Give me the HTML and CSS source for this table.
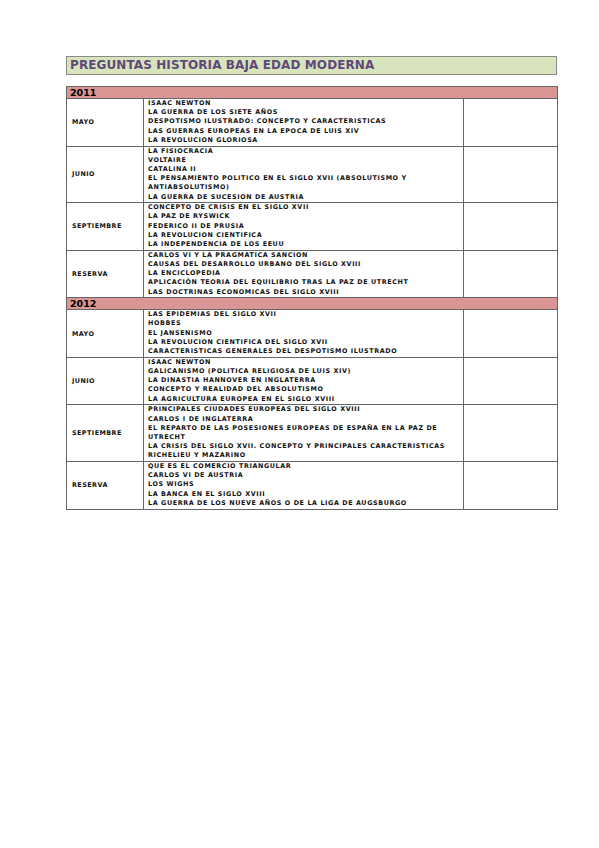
FILE: index.html
```html
<!DOCTYPE html>
<html lang="es">
<head>
<meta charset="utf-8">
<title>Preguntas Historia Baja Edad Moderna</title>
<link rel="stylesheet" href="styles.css">
</head>
<body>
<div class="page">
  <div class="title">PREGUNTAS HISTORIA BAJA EDAD MODERNA</div>
  <table class="grid">
    <colgroup><col class="c1"><col class="c2"><col class="c3"></colgroup>
    <tr class="year"><td colspan="3">2011</td></tr>
    <tr>
      <td class="month">MAYO</td>
      <td class="topics">ISAAC NEWTON<br>LA GUERRA DE LOS SIETE AÑOS<br>DESPOTISMO ILUSTRADO: CONCEPTO Y CARACTERISTICAS<br>LAS GUERRAS EUROPEAS EN LA EPOCA DE LUIS XIV<br>LA REVOLUCION GLORIOSA</td>
      <td></td>
    </tr>
    <tr>
      <td class="month">JUNIO</td>
      <td class="topics">LA FISIOCRACIA<br>VOLTAIRE<br>CATALINA II<br>EL PENSAMIENTO POLITICO EN EL SIGLO XVII (ABSOLUTISMO Y<br>ANTIABSOLUTISMO)<br>LA GUERRA DE SUCESION DE AUSTRIA</td>
      <td></td>
    </tr>
    <tr>
      <td class="month">SEPTIEMBRE</td>
      <td class="topics">CONCEPTO DE CRISIS EN EL SIGLO XVII<br>LA PAZ DE RYSWICK<br>FEDERICO II DE PRUSIA<br>LA REVOLUCION CIENTIFICA<br>LA INDEPENDENCIA DE LOS EEUU</td>
      <td></td>
    </tr>
    <tr>
      <td class="month">RESERVA</td>
      <td class="topics">CARLOS VI Y LA PRAGMATICA SANCION<br>CAUSAS DEL DESARROLLO URBANO DEL SIGLO XVIII<br>LA ENCICLOPEDIA<br>APLICACIÓN TEORIA DEL EQUILIBRIO TRAS LA PAZ DE UTRECHT<br>LAS DOCTRINAS ECONOMICAS DEL SIGLO XVIII</td>
      <td></td>
    </tr>
    <tr class="year"><td colspan="3">2012</td></tr>
    <tr>
      <td class="month">MAYO</td>
      <td class="topics">LAS EPIDEMIAS DEL SIGLO XVII<br>HOBBES<br>EL JANSENISMO<br>LA REVOLUCION CIENTIFICA DEL SIGLO XVII<br>CARACTERISTICAS GENERALES DEL DESPOTISMO ILUSTRADO</td>
      <td></td>
    </tr>
    <tr>
      <td class="month">JUNIO</td>
      <td class="topics">ISAAC NEWTON<br>GALICANISMO (POLITICA RELIGIOSA DE LUIS XIV)<br>LA DINASTIA HANNOVER EN INGLATERRA<br>CONCEPTO Y REALIDAD DEL ABSOLUTISMO<br>LA AGRICULTURA EUROPEA EN EL SIGLO XVIII</td>
      <td></td>
    </tr>
    <tr>
      <td class="month">SEPTIEMBRE</td>
      <td class="topics">PRINCIPALES CIUDADES EUROPEAS DEL SIGLO XVIII<br>CARLOS I DE INGLATERRA<br>EL REPARTO DE LAS POSESIONES EUROPEAS DE ESPAÑA EN LA PAZ DE<br>UTRECHT<br>LA CRISIS DEL SIGLO XVII. CONCEPTO Y PRINCIPALES CARACTERISTICAS<br>RICHELIEU Y MAZARINO</td>
      <td></td>
    </tr>
    <tr>
      <td class="month">RESERVA</td>
      <td class="topics">QUE ES EL COMERCIO TRIANGULAR<br>CARLOS VI DE AUSTRIA<br>LOS WIGHS<br>LA BANCA EN EL SIGLO XVIII<br>LA GUERRA DE LOS NUEVE AÑOS O DE LA LIGA DE AUGSBURGO</td>
      <td></td>
    </tr>
  </table>
</div>
</body>
</html>
```
FILE: styles.css
```css
html, body {
  margin: 0;
  padding: 0;
  background: #ffffff;
}
.page {
  padding: 56px 42px 0 66px;
  font-family: "DejaVu Sans", sans-serif;
}
.title {
  width: 491px;
  box-sizing: border-box;
  height: 19px;
  background: #d8e4bc;
  border: 1.5px solid #8a8a8a;
  color: #60497a;
  font-weight: bold;
  font-size: 12px;
  line-height: 16px;
  padding-left: 3px;
  letter-spacing: 0.1px;
}
.grid {
  margin-top: 11px;
  width: 491px;
  border-collapse: collapse;
  table-layout: fixed;
  border: 1.5px solid #666;
}
.c1 { width: 77px; }
.c2 { width: 320px; }
.c3 { width: 94px; }
.grid td {
  border: 1px solid #666;
  padding: 0;
  vertical-align: middle;
}
.year td {
  background: #da9694;
  font-weight: bold;
  font-size: 9.5px;
  height: 11px;
  line-height: 11px;
  padding-left: 3px;
}
.month {
  font-size: 6.4px;
  font-weight: bold;
  padding-left: 5px !important;
  color: #111;
  letter-spacing: 0.45px;
}
.topics {
  font-size: 6.4px;
  font-weight: bold;
  line-height: 9.2px;
  padding: 0 0 0.5px 4px !important;
  color: #111;
  letter-spacing: 0.6px;
}
```
